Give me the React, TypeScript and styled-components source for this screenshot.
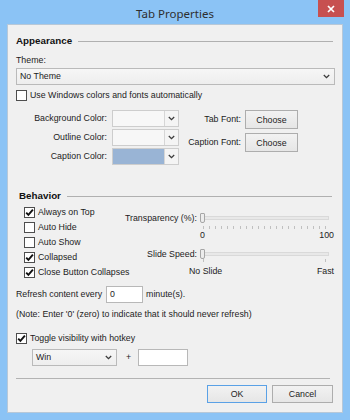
import React from 'react';
import styled, { createGlobalStyle } from 'styled-components';

const GlobalStyle = createGlobalStyle`
  html, body { margin: 0; padding: 0; background: #8bc3f5; }
  #root { width: 350px; height: 420px; }
`;

const Window = styled.div`
  width: 350px;
  height: 420px;
  box-sizing: border-box;
  background: #8bc3f5;
  display: flex;
  flex-direction: column;
`;

const TitleBar = styled.div`
  height: 24px;
  flex: none;
  display: grid;
  grid-template-columns: 1fr auto 1fr;
  align-items: center;
`;

const Title = styled.div`
  grid-column: 2;
  font-family: "Noto Sans", "Open Sans", sans-serif;
  font-size: 11.5px;
  color: #2e2e2e;
  margin-top: 2px;
`;

const CloseButton = styled.div`
  grid-column: 3;
  justify-self: end;
  align-self: start;
  width: 26px;
  height: 17px;
  margin-right: 6px;
  background: #c75050;
  display: flex;
  align-items: center;
  justify-content: center;
`;

const Client = styled.div`
  flex: 1;
  margin: 0 7px 7px 7px;
  background: #f0f0f0;
  border: 1px solid #b7c8d8;
  box-sizing: border-box;
  display: flex;
  flex-direction: column;
  padding: 0 8px 0 8px;
  font-family: "Liberation Sans", Arial, sans-serif;
  font-size: 8.8px;
  line-height: 1;
  color: #1c1c1c;
`;

const SectionHeader = styled.div<{ $top: number; $indent: number }>`
  display: flex;
  align-items: center;
  gap: 6px;
  height: 12px;
  margin-top: ${(p) => p.$top}px;
  margin-left: ${(p) => p.$indent}px;
`;

const HeaderText = styled.span`
  font-weight: bold;
  font-size: 9.8px;
  color: #111;
`;

const HeaderRule = styled.div<{ $right: number }>`
  flex: 1;
  height: 1px;
  background: #b0b0b0;
  margin-right: ${(p) => p.$right}px;
`;

const FieldLabel = styled.div<{ $top: number }>`
  height: 12px;
  display: flex;
  align-items: center;
  margin-top: ${(p) => p.$top}px;
`;

const Dropdown = styled.div<{ $top?: number; $width?: string }>`
  height: 17px;
  box-sizing: border-box;
  width: ${(p) => p.$width ?? 'auto'};
  margin-top: ${(p) => p.$top ?? 0}px;
  border: 1px solid #bababa;
  background: linear-gradient(#f6f6f6, #eeeeee);
  display: flex;
  align-items: center;
  justify-content: space-between;
  padding: 0 4px 0 3px;
`;

const CheckRow = styled.div<{ $top?: number; $h: number }>`
  display: flex;
  align-items: center;
  gap: 3px;
  height: ${(p) => p.$h}px;
  margin-top: ${(p) => p.$top ?? 0}px;
  white-space: nowrap;
`;

const Box = styled.span`
  width: 11px;
  height: 11px;
  box-sizing: border-box;
  border: 1px solid #4e4e4e;
  background: #fff;
  display: flex;
  align-items: center;
  justify-content: center;
  flex: none;
`;

const ColorArea = styled.div`
  display: flex;
  margin-top: 9px;
`;

const ColorGrid = styled.div`
  display: grid;
  grid-template-columns: 91px 67px;
  grid-auto-rows: 17px;
  column-gap: 5px;
  row-gap: 2px;
  align-items: center;
`;

const FontGrid = styled.div`
  display: grid;
  grid-template-columns: 56px 53px;
  grid-auto-rows: 19px;
  column-gap: 4px;
  row-gap: 4px;
  align-items: center;
  margin-left: 6px;
`;

const RightLabel = styled.div`
  text-align: right;
  white-space: nowrap;
`;

const ColorCombo = styled.div`
  height: 17px;
  box-sizing: border-box;
  border: 1px solid #cdcdcd;
  background: #f7f7f7;
  display: flex;
`;

const Swatch = styled.div<{ $color: string }>`
  flex: 1;
  background: ${(p) => p.$color};
`;

const ComboButton = styled.div`
  width: 13px;
  border-left: 1px solid #d6d6d6;
  display: flex;
  align-items: center;
  justify-content: center;
  background: #f4f4f4;
`;

const PushButton = styled.button<{ $w: number; $h: number; $default?: boolean }>`
  width: ${(p) => p.$w}px;
  height: ${(p) => p.$h}px;
  box-sizing: border-box;
  padding: 0;
  border: 1px solid ${(p) => (p.$default ? '#5aa1e6' : '#adadad')};
  background: linear-gradient(#f2f2f2, #e6e6e6);
  font-family: "Liberation Sans", Arial, sans-serif;
  font-size: 8.8px;
  color: #1c1c1c;
`;

const BehaviorBody = styled.div`
  display: flex;
  margin-top: 3px;
  padding-left: 8px;
`;

const CheckColumn = styled.div`
  width: 96px;
  display: flex;
  flex-direction: column;
`;

const SliderColumn = styled.div`
  flex: 1;
  display: flex;
  flex-direction: column;
  padding-top: 8px;
`;

const SliderLine = styled.div<{ $top?: number; $h: number }>`
  display: grid;
  grid-template-columns: 1fr 134px;
  column-gap: 3px;
  height: ${(p) => p.$h}px;
  margin-top: ${(p) => p.$top ?? 0}px;
  align-items: center;
`;

const Track = styled.div`
  position: relative;
  height: 10px;
  width: 129px;
  display: flex;
  align-items: center;
`;

const TrackGroove = styled.div`
  width: 100%;
  height: 4px;
  box-sizing: border-box;
  background: #e8e8e8;
  border: 1px solid #d9d9d9;
`;

const Thumb = styled.div`
  position: absolute;
  left: 0;
  top: 0;
  width: 5px;
  height: 10px;
  box-sizing: border-box;
  background: #ececec;
  border: 1px solid #a6a6a6;
  border-radius: 1px 1px 2px 2px;
`;

const Ticks = styled.div`
  grid-column: 2;
  margin-left: 3px;
  width: 123px;
  height: 100%;
  display: flex;
  justify-content: space-between;
`;

const Tick = styled.span`
  width: 1px;
  height: 100%;
  background: #c0c0c0;
`;

const ScaleLabels = styled.div<{ $shift: number }>`
  grid-column: 2;
  display: flex;
  justify-content: space-between;
  margin-left: ${(p) => p.$shift}px;
  white-space: nowrap;
`;

const InlineRow = styled.div<{ $top: number; $h: number; $indent?: number }>`
  display: flex;
  align-items: center;
  height: ${(p) => p.$h}px;
  margin-top: ${(p) => p.$top}px;
  padding-left: ${(p) => p.$indent ?? 0}px;
  white-space: nowrap;
`;

const TextBox = styled.div<{ $w: number }>`
  width: ${(p) => p.$w}px;
  height: 17px;
  box-sizing: border-box;
  background: #fff;
  border: 1px solid #b8b8b8;
  display: flex;
  align-items: center;
  padding-left: 3px;
`;

const Plus = styled.span`
  margin: 0 7px 0 9px;
`;

const Gap = styled.span<{ $w: number }>`
  display: inline-block;
  width: ${(p) => p.$w}px;
`;

const Footer = styled.div`
  margin-top: auto;
  display: flex;
  flex-direction: column;
`;

const Separator = styled.div`
  height: 1px;
  background: #b3b3b3;
  margin-right: 4px;
  margin-bottom: 6px;
`;

const ButtonBar = styled.div`
  display: flex;
  justify-content: flex-end;
  gap: 5px;
  margin-right: 1px;
  margin-bottom: 9px;
`;

const Chevron = () => (
  <svg width="7" height="5" viewBox="0 0 7 5">
    <path d="M0.8 1 L3.5 3.7 L6.2 1" fill="none" stroke="#3c3c3c" strokeWidth="1.3" />
  </svg>
);

const CheckMark = () => (
  <svg width="9" height="9" viewBox="0 0 9 9">
    <path d="M1.2 4.6 L3.4 6.9 L7.9 1.7" fill="none" stroke="#111" strokeWidth="1.9" />
  </svg>
);

const Checkbox = ({ checked, label }: { checked?: boolean; label: string }) => (
  <>
    <Box>{checked && <CheckMark />}</Box>
    <span>{label}</span>
  </>
);

const ColorPicker = ({ color }: { color: string }) => (
  <ColorCombo>
    <Swatch $color={color} />
    <ComboButton>
      <Chevron />
    </ComboButton>
  </ColorCombo>
);

const behaviorChecks: [string, boolean][] = [
  ['Always on Top', true],
  ['Auto Hide', false],
  ['Auto Show', false],
  ['Collapsed', true],
  ['Close Button Collapses', true],
];

export default function App() {
  return (
    <>
      <GlobalStyle />
      <Window>
        <TitleBar>
          <Title>Tab Properties</Title>
          <CloseButton>
            <svg width="8" height="8" viewBox="0 0 8 8">
              <path d="M1 1 L7 7 M7 1 L1 7" stroke="#fff" strokeWidth="1.7" />
            </svg>
          </CloseButton>
        </TitleBar>
        <Client>
          <SectionHeader $top={10} $indent={0}>
            <HeaderText>Appearance</HeaderText>
            <HeaderRule $right={1} />
          </SectionHeader>
          <FieldLabel $top={7}>Theme:</FieldLabel>
          <Dropdown $top={2} $width="calc(100% + 1px)">
            <span>No Theme</span>
            <Chevron />
          </Dropdown>
          <CheckRow $top={4} $h={12}>
            <Checkbox label="Use Windows colors and fonts automatically" />
          </CheckRow>
          <ColorArea>
            <ColorGrid>
              <RightLabel>Background Color:</RightLabel>
              <ColorPicker color="#f7f7f7" />
              <RightLabel>Outline Color:</RightLabel>
              <ColorPicker color="#f7f7f7" />
              <RightLabel>Caption Color:</RightLabel>
              <ColorPicker color="#99b4d5" />
            </ColorGrid>
            <FontGrid>
              <RightLabel>Tab Font:</RightLabel>
              <PushButton $w={53} $h={19}>Choose</PushButton>
              <RightLabel>Caption Font:</RightLabel>
              <PushButton $w={53} $h={19}>Choose</PushButton>
            </FontGrid>
          </ColorArea>

          <SectionHeader $top={25} $indent={3}>
            <HeaderText>Behavior</HeaderText>
            <HeaderRule $right={2} />
          </SectionHeader>
          <BehaviorBody>
            <CheckColumn>
              {behaviorChecks.map(([label, checked]) => (
                <CheckRow key={label} $h={15}>
                  <Checkbox label={label} checked={checked} />
                </CheckRow>
              ))}
            </CheckColumn>
            <SliderColumn>
              <SliderLine $h={10}>
                <RightLabel>Transparency (%):</RightLabel>
                <Track>
                  <TrackGroove />
                  <Thumb />
                </Track>
              </SliderLine>
              <SliderLine $h={3} $top={3}>
                <Ticks>
                  {Array.from({ length: 21 }, (_, i) => (
                    <Tick key={i} />
                  ))}
                </Ticks>
              </SliderLine>
              <SliderLine $h={10} $top={1}>
                <ScaleLabels $shift={0}>
                  <span>0</span>
                  <span>100</span>
                </ScaleLabels>
              </SliderLine>
              <SliderLine $h={10} $top={9}>
                <RightLabel>Slide Speed:</RightLabel>
                <Track>
                  <TrackGroove />
                  <Thumb />
                </Track>
              </SliderLine>
              <SliderLine $h={3} $top={0}>
                <Ticks>
                  <Tick />
                  <Tick />
                </Ticks>
              </SliderLine>
              <SliderLine $h={10} $top={4}>
                <ScaleLabels $shift={-11}>
                  <span>No Slide</span>
                  <span>Fast</span>
                </ScaleLabels>
              </SliderLine>
            </SliderColumn>
          </BehaviorBody>

          <InlineRow $top={6} $h={17}>
            <span>Refresh content every</span>
            <Gap $w={4} />
            <TextBox $w={37}>0</TextBox>
            <Gap $w={3} />
            <span>minute(s).</span>
          </InlineRow>
          <InlineRow $top={6} $h={10}>
            (Note: Enter '0' (zero) to indicate that it should never refresh)
          </InlineRow>
          <CheckRow $top={13} $h={12}>
            <Checkbox label="Toggle visibility with hotkey" checked />
          </CheckRow>
          <InlineRow $top={5} $h={17} $indent={16}>
            <Dropdown $width="85px">
              <span>Win</span>
              <Chevron />
            </Dropdown>
            <Plus>+</Plus>
            <TextBox $w={50} />
          </InlineRow>

          <Footer>
            <Separator />
            <ButtonBar>
              <PushButton $w={60} $h={18} $default>OK</PushButton>
              <PushButton $w={61} $h={18}>Cancel</PushButton>
            </ButtonBar>
          </Footer>
        </Client>
      </Window>
    </>
  );
}
